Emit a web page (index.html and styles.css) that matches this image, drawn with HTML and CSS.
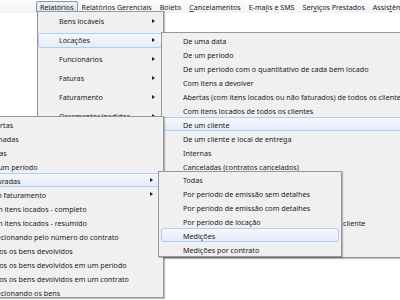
FILE: index.html
```html
<!DOCTYPE html>
<html lang="pt-BR">
<head>
  <meta charset="UTF-8">
  <title>Relatórios</title>
  <link rel="stylesheet" href="styles.css">
</head>
<body>
  <div class="menubar">
    <div class="bar-item open"><u>R</u>elatórios</div>
    <div class="bar-item">Relat<u>ó</u>rios Gerenciais</div>
    <div class="bar-item"><u>B</u>oleto</div>
    <div class="bar-item"><u>C</u>ancelamentos</div>
    <div class="bar-item">E-ma<u>i</u>ls e SMS</div>
    <div class="bar-item">Ser<u>v</u>iços Prestados</div>
    <div class="bar-item">Assis<u>t</u>ência</div>
  </div>

  <!-- Relatórios -->
  <div class="menu menu-main">
    <div class="item sub">Bens locáveis</div>
    <div class="item sub hot">Locações</div>
    <div class="item sub">Funcionários</div>
    <div class="item sub">Faturas</div>
    <div class="item sub">Faturamento</div>
    <div class="item sub">Orçamentos/pedidos</div>
    <div class="item sub">Clientes</div>
    <div class="item sub">Fornecedores</div>
    <div class="item sub">Estoque</div>
    <div class="item sub">Financeiro</div>
  </div>

  <!-- Relatórios > Locações -->
  <div class="menu menu-loc">
    <div class="item">De uma data</div>
    <div class="item">De um período</div>
    <div class="item">De um período com o quantitativo de cada bem locado</div>
    <div class="item">Com itens a devolver</div>
    <div class="item">Abertas (com itens locados ou não faturados) de todos os clientes</div>
    <div class="item">Com itens locados de todos os clientes</div>
    <div class="item hot">De um cliente</div>
    <div class="item">De um cliente e local de entrega</div>
    <div class="item">Internas</div>
    <div class="item">Canceladas (contratos cancelados)</div>
    <div class="item">Todas</div>
    <div class="item">Faturadas</div>
    <div class="item">A faturar</div>
    <div class="item">De um período com o quantitativo de bens por cliente</div>
    <div class="item">Medições</div>
    <div class="item">Medições por contrato</div>
  </div>

  <!-- segunda janela de contratos -->
  <div class="menu menu-con">
    <div class="item">Abertas</div>
    <div class="item">Fechadas</div>
    <div class="item">Todas</div>
    <div class="item">De um período</div>
    <div class="item sub hot">Faturadas</div>
    <div class="item sub">Sem faturamento</div>
    <div class="item">Com itens locados - completo</div>
    <div class="item">Com itens locados - resumido</div>
    <div class="item">Selecionando pelo número do contrato</div>
    <div class="item">Todos os bens devolvidos</div>
    <div class="item">Todos os bens devolvidos em um período</div>
    <div class="item">Todos os bens devolvidos em um contrato</div>
    <div class="item">Selecionando os bens</div>
  </div>

  <!-- Faturadas -->
  <div class="menu menu-fat">
    <div class="item">Todas</div>
    <div class="item">Por período de emissão sem detalhes</div>
    <div class="item">Por período de emissão com detalhes</div>
    <div class="item">Por período de locação</div>
    <div class="item hot">Medições</div>
    <div class="item">Medições por contrato</div>
  </div>
</body>
</html>
```

FILE: styles.css
```css
html, body {
  margin: 0;
  padding: 0;
  background: #fff;
  font-family: "Noto Sans", sans-serif;
  font-size: 7.2px;
  color: #1b1b1b;
}
body {
  position: relative;
  width: 400px;
  height: 300px;
  overflow: hidden;
}
u {
  text-decoration: underline;
  text-decoration-color: #555;
  text-underline-offset: 1px;
}
.menubar {
  display: flex;
  align-items: center;
  height: 13px;
  padding-left: 36px;
  background: linear-gradient(#fbfcfd, #f1f3f6);
  white-space: nowrap;
  font-size: 7.1px;
}
.bar-item {
  padding: 0 3px;
  height: 10px;
  line-height: 10px;
  border: 1px solid transparent;
  border-radius: 2px;
}
.bar-item.open {
  border-color: #8c97a6;
  background: linear-gradient(#eef1f5, #dde3ea);
}
.menu {
  position: absolute;
  box-sizing: border-box;
  display: flex;
  flex-direction: column;
  background: #f0f0f0;
  border: 1px solid #979797;
  box-shadow: 1px 1px 1px rgba(0, 0, 0, 0.25);
  white-space: nowrap;
}
.item {
  position: relative;
  box-sizing: border-box;
  height: 14px;
  line-height: 14px;
  flex: none;
  border: 1px solid transparent;
  border-radius: 2px;
  margin: 0 1px;
}
.item.hot {
  border-color: #b3cdee;
  background: linear-gradient(#f5f8fd, #e4ecf8);
}
.item.sub::after {
  content: "";
  position: absolute;
  right: 7px;
  top: 50%;
  margin-top: -2.5px;
  border-style: solid;
  border-width: 2.5px 0 2.5px 3px;
  border-color: transparent transparent transparent #222;
}
.menu-main {
  left: 37px;
  top: 11px;
  width: 127px;
}
.menu-main .item {
  height: 19px;
  line-height: 17px;
  padding-left: 20px;
  margin: 0;
}
.menu-main .item.hot {
  height: 15px;
  line-height: 13px;
  margin: 2px 0;
}
.menu-loc {
  left: 161px;
  top: 32px;
  width: 270px;
  height: 226px;
}
.menu-loc .item {
  padding-left: 19px;
}
.menu-con {
  left: -40px;
  top: 116px;
  width: 204px;
  height: 182px;
}
.menu-con .item {
  padding-left: 24px;
}
.menu-con .item.sub::after {
  right: 8px;
}
.menu-fat {
  left: 158px;
  top: 171px;
  width: 184px;
  height: 86px;
}
.menu-fat .item {
  padding-left: 21px;
  margin: 0 2px;
}
```
